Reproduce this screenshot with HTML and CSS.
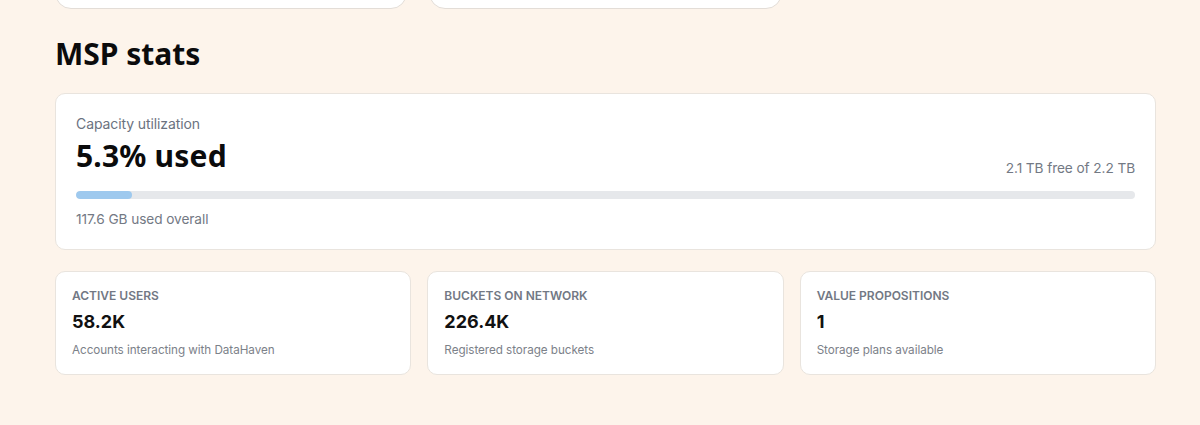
FILE: index.html
```html
<!DOCTYPE html>
<html lang="en">
<head>
<meta charset="utf-8">
<title>MSP stats</title>
<link rel="stylesheet" href="styles.css">
</head>
<body>
<main class="page">
  <div class="top-row">
    <div class="top-card"></div>
    <div class="top-card"></div>
  </div>

  <h2 class="section-title">MSP stats</h2>

  <section class="capacity-card">
    <div class="cap-label">Capacity utilization</div>
    <div class="cap-row">
      <div class="cap-value">5.3% used</div>
      <div class="cap-free">2.1 TB free of 2.2 TB</div>
    </div>
    <div class="bar"><div class="bar-fill" style="width: 5.3%"></div></div>
    <div class="cap-foot">117.6 GB used overall</div>
  </section>

  <div class="stat-grid">
    <div class="stat-card">
      <div class="stat-label">Active users</div>
      <div class="stat-value">58.2K</div>
      <div class="stat-desc">Accounts interacting with DataHaven</div>
    </div>
    <div class="stat-card">
      <div class="stat-label">Buckets on network</div>
      <div class="stat-value">226.4K</div>
      <div class="stat-desc">Registered storage buckets</div>
    </div>
    <div class="stat-card">
      <div class="stat-label">Value propositions</div>
      <div class="stat-value">1</div>
      <div class="stat-desc">Storage plans available</div>
    </div>
  </div>
</main>
</body>
</html>
```

FILE: styles.css
```css
* { box-sizing: border-box; }

html, body {
  margin: 0;
  padding: 0;
  background: #fdf4eb;
  height: 100%;
  overflow: hidden;
}

body {
  font-family: Inter, "Noto Sans", sans-serif;
  color: #111111;
}

.page {
  padding: 0 44px 0 55px;
}

.top-row {
  display: grid;
  grid-template-columns: repeat(3, 1fr);
  gap: 22px;
  margin-top: -31px;
}

.top-card {
  height: 40px;
  background: #ffffff;
  border: 1px solid #e3ddd7;
  border-radius: 16px;
}

.section-title {
  font-family: "Noto Sans", sans-serif;
  font-weight: 700;
  font-size: 30px;
  line-height: 36px;
  margin: 27px 0 21px;
  color: #0b0b0c;
}

.capacity-card {
  background: #ffffff;
  border: 1px solid #e9e4de;
  border-radius: 10px;
  padding: 20px;
}

.cap-label {
  font-size: 14px;
  line-height: 20px;
  color: #6b7280;
  letter-spacing: -0.1px;
}

.cap-row {
  display: flex;
  justify-content: space-between;
  align-items: flex-end;
  margin-top: 4px;
}

.cap-value {
  font-family: "Noto Sans", sans-serif;
  font-weight: 700;
  font-size: 30px;
  line-height: 36px;
  margin-bottom: 4px;
  color: #0b0b0c;
  letter-spacing: 0.2px;
}

.cap-free {
  font-size: 13.7px;
  line-height: 20px;
  color: #737984;
  letter-spacing: -0.1px;
}

.bar {
  margin-top: 13px;
  height: 8px;
  border-radius: 999px;
  background: #e6e8eb;
  overflow: hidden;
}

.bar-fill {
  height: 100%;
  background: #9ec9ee;
  border-radius: 999px;
}

.cap-foot {
  margin-top: 10px;
  font-size: 13.7px;
  line-height: 20px;
  color: #737984;
  letter-spacing: -0.1px;
}

.stat-grid {
  display: grid;
  grid-template-columns: repeat(3, 1fr);
  gap: 16px;
  margin-top: 21px;
}

.stat-card {
  background: #ffffff;
  border: 1px solid #e9e4de;
  border-radius: 10px;
  padding: 16px;
}

.stat-label {
  font-size: 12px;
  line-height: 16px;
  font-weight: 600;
  text-transform: uppercase;
  color: #727884;
  margin-bottom: 6px;
}

.stat-value {
  font-size: 18px;
  line-height: 24px;
  font-weight: 700;
  color: #111111;
}

.stat-desc {
  margin-top: 8px;
  font-size: 11.7px;
  line-height: 16px;
  color: #7c8189;
  letter-spacing: -0.05px;
}
```
